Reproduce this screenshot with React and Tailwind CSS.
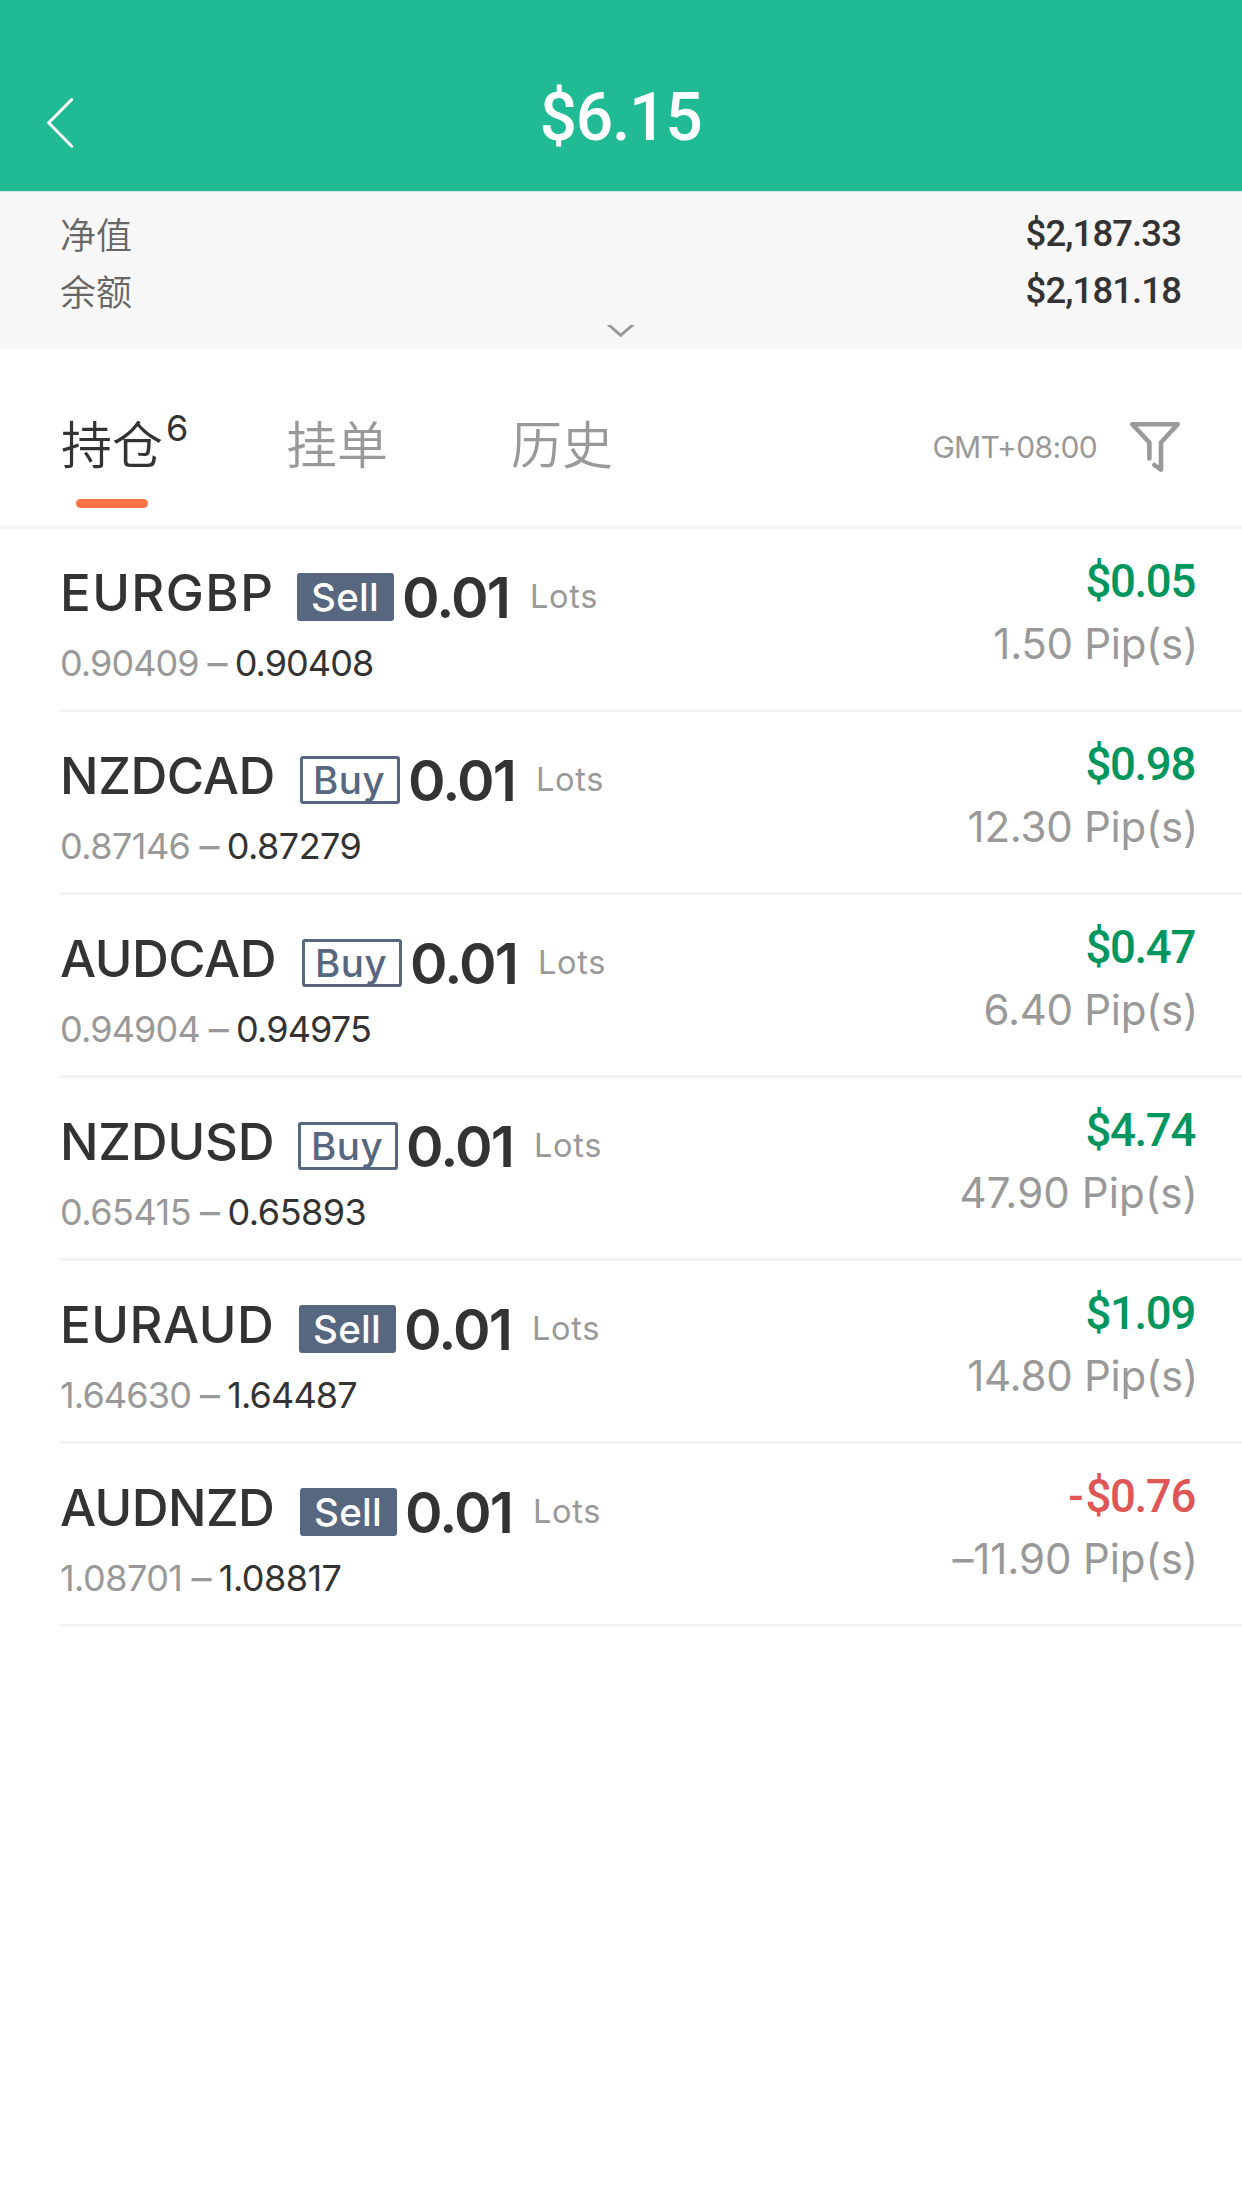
const positions = [
  { symbol: 'EURGBP', fit: 'tracking-[1.4px]', width: 'w-[237px]', side: 'Sell', open: '0.90409', current: '0.90408', priceFit: 'tracking-[-0.95px]', profit: '$0.05', pips: '1.50', pipsFit: 'tracking-[-0.3px]' },
  { symbol: 'NZDCAD', fit: 'tracking-[-0.4px]', width: 'w-[240px]', side: 'Buy', open: '0.87146', current: '0.87279', priceFit: 'tracking-[-0.55px]', profit: '$0.98', pips: '12.30', pipsFit: 'tracking-[-0.25px]' },
  { symbol: 'AUDCAD', fit: 'tracking-[-0.5px]', width: 'w-[242px]', side: 'Buy', open: '0.94904', current: '0.94975', priceFit: 'tracking-[-0.85px]', profit: '$0.47', pips: '6.40', pipsFit: 'tracking-[-0.3px]' },
  { symbol: 'NZDUSD', fit: 'tracking-[-0.2px]', width: 'w-[238px]', side: 'Buy', open: '0.65415', current: '0.65893', priceFit: 'tracking-[-0.5px]', profit: '$4.74', pips: '47.90', pipsFit: 'tracking-[0.1px]' },
  { symbol: 'EURAUD', fit: 'tracking-[0.5px]', width: 'w-[239px]', side: 'Sell', open: '1.64630', current: '1.64487', priceFit: 'tracking-[-0.85px]', profit: '$1.09', pips: '14.80', pipsFit: 'tracking-[-0.25px]' },
  { symbol: 'AUDNZD', fit: 'tracking-[-0.6px]', width: 'w-[240px]', side: 'Sell', open: '1.08701', current: '1.08817', priceFit: 'tracking-[-0.55px]', profit: '-$0.76', pips: '–11.90', pipsFit: 'tracking-[-0.1px]' },
];

const summary = [
  { label: '净值', value: '$2,187.33' },
  { label: '余额', value: '$2,181.18' },
];

function Header() {
  return (
    <header className="grid h-[191px] grid-cols-3 bg-[#20bb94] pt-[85px] text-white">
      <svg className="ml-[46px] mt-[12px] h-[52px] w-[30px]" viewBox="0 0 30 52" fill="none" stroke="currentColor" strokeWidth="3" strokeLinecap="round">
        <path d="M25.7 2.5 2.7 25.8l23 23.4" />
      </svg>
      <h1 className="-ml-px text-center font-['Roboto',sans-serif] text-[66px] font-medium leading-[66px] tracking-[-1.3px]">$6.15</h1>
    </header>
  );
}

function Summary() {
  return (
    <section className="h-[158px] border-t border-[#d8e5e1] bg-[#f7f7f7] pt-[13px]">
      {summary.map((s) => (
        <div key={s.label} className="flex h-[57px] items-start justify-between pl-[60px] pr-[61px]">
          <span className="font-['Noto_Sans_CJK_SC',sans-serif] text-[36px] font-[350] leading-[57px] text-[#666]">{s.label}</span>
          <span className="font-['Roboto',sans-serif] text-[36.5px] font-medium leading-[57px] tracking-[-0.9px] text-[#333]">{s.value}</span>
        </div>
      ))}
      <svg className="mx-auto mt-[6px] h-[12px] w-[28px]" viewBox="0 0 28 12" fill="none" stroke="#999" strokeWidth="3">
        <path d="M.5-1.2 13.7 10.3 27-1.2" />
      </svg>
    </section>
  );
}

function Tab({ label, count, active }) {
  return (
    <div className={active ? 'w-[225px] text-[#333]' : 'w-[225px] text-[#999]'}>
      <div className="flex items-start">
        <span className="mt-[2px] font-['Noto_Sans_CJK_SC',sans-serif] text-[51px] font-[350] leading-[60px]">{label}</span>
        {count && <span className="ml-[3px] text-[36px] font-normal leading-[36px]">{count}</span>}
      </div>
      {active && <div className="ml-[15px] mt-[27px] h-[9px] w-[72px] rounded-full bg-[#ff7444]" />}
    </div>
  );
}

function Tabs() {
  return (
    <nav className="flex h-[180px] items-start border-b-[3px] border-[#f3f3f3] pl-[61px] pr-[62px] pt-[61px]">
      <Tab label="持仓" count="6" active />
      <Tab label="挂单" />
      <Tab label="历史" />
      <div className="ml-auto mt-[12px] flex items-start gap-[33px]">
        <span className="mt-[3px] text-[30px] font-normal leading-[45px] tracking-[-0.65px] text-[#999]">GMT+08:00</span>
        <svg className="size-[50px]" viewBox="0 0 50 50" fill="none" stroke="#999" strokeWidth="4.6" strokeLinecap="round" strokeLinejoin="round">
          <path d="M19.4 36.5V20.5L2.3 2.3H47.7L31 20.5V47.7L24.4 43" />
        </svg>
      </div>
    </nav>
  );
}

function Position({ p }) {
  const sell = p.side === 'Sell';
  const loss = p.profit.startsWith('-');
  return (
    <li className="ml-[60px] flex h-[183px] items-start justify-between border-b-[3px] border-[#f3f3f3] pr-[47px]">
      <div className="pt-[44px]">
        <div className="flex h-[48px] items-start whitespace-nowrap text-[#333]">
          <span className={`${p.width} ${p.fit} text-[51px] font-[550] leading-[40px]`}>{p.symbol}</span>
          <span
            className={
              sell
                ? 'h-[48px] w-[97px] rounded-[3px] border-2 border-[#586780] bg-[#586780] pl-[12px] text-[38.5px] font-medium leading-[45px] tracking-[0.3px] text-white'
                : 'h-[48px] w-[100px] rounded-[3px] border-[3px] border-[#586780] pl-[10px] text-[38.5px] font-medium leading-[43px] tracking-[0.5px] text-[#586780]'
            }
          >
            {p.side}
          </span>
          <span className="ml-[8px] w-[127px] text-[57px] font-semibold leading-[49px] tracking-[-1.8px]">0.01</span>
          <span className="ml-px text-[32.5px] font-normal leading-[48px] tracking-[0.7px] text-[#999]">Lots</span>
        </div>
        <div className={`mt-[18px] flex h-[48px] items-start text-[36px] font-normal leading-[48px] text-[#333] ${p.priceFit}`}>
          <span className="text-[#999]">{p.open}</span>
          <span className="ml-[9px] mr-[8px] text-[40px] text-[#999]">–</span>
          <span>{p.current}</span>
        </div>
      </div>
      <div className="pt-[31px] text-right">
        <div className={`font-['Roboto',sans-serif] text-[45.5px] font-medium leading-[44px] tracking-[-1.3px] ${loss ? 'text-[#e05555]' : 'text-[#00965e]'}`}>
          {loss && <span className="mr-[3px]">-</span>}
          {loss ? p.profit.slice(1) : p.profit}
        </div>
        <div className={`-mr-[3px] mt-[18px] text-[42px] font-normal leading-[44px] text-[#999] ${p.pipsFit}`}>{p.pips} Pip(s)</div>
      </div>
    </li>
  );
}

export default function App() {
  return (
    <main className="min-h-[2208px] w-[1242px] overflow-hidden bg-white font-['Inter','Noto_Sans_CJK_SC',sans-serif]">
      <Header />
      <Summary />
      <Tabs />
      <ul>
        {positions.map((p) => (
          <Position key={p.symbol} p={p} />
        ))}
      </ul>
    </main>
  );
}
